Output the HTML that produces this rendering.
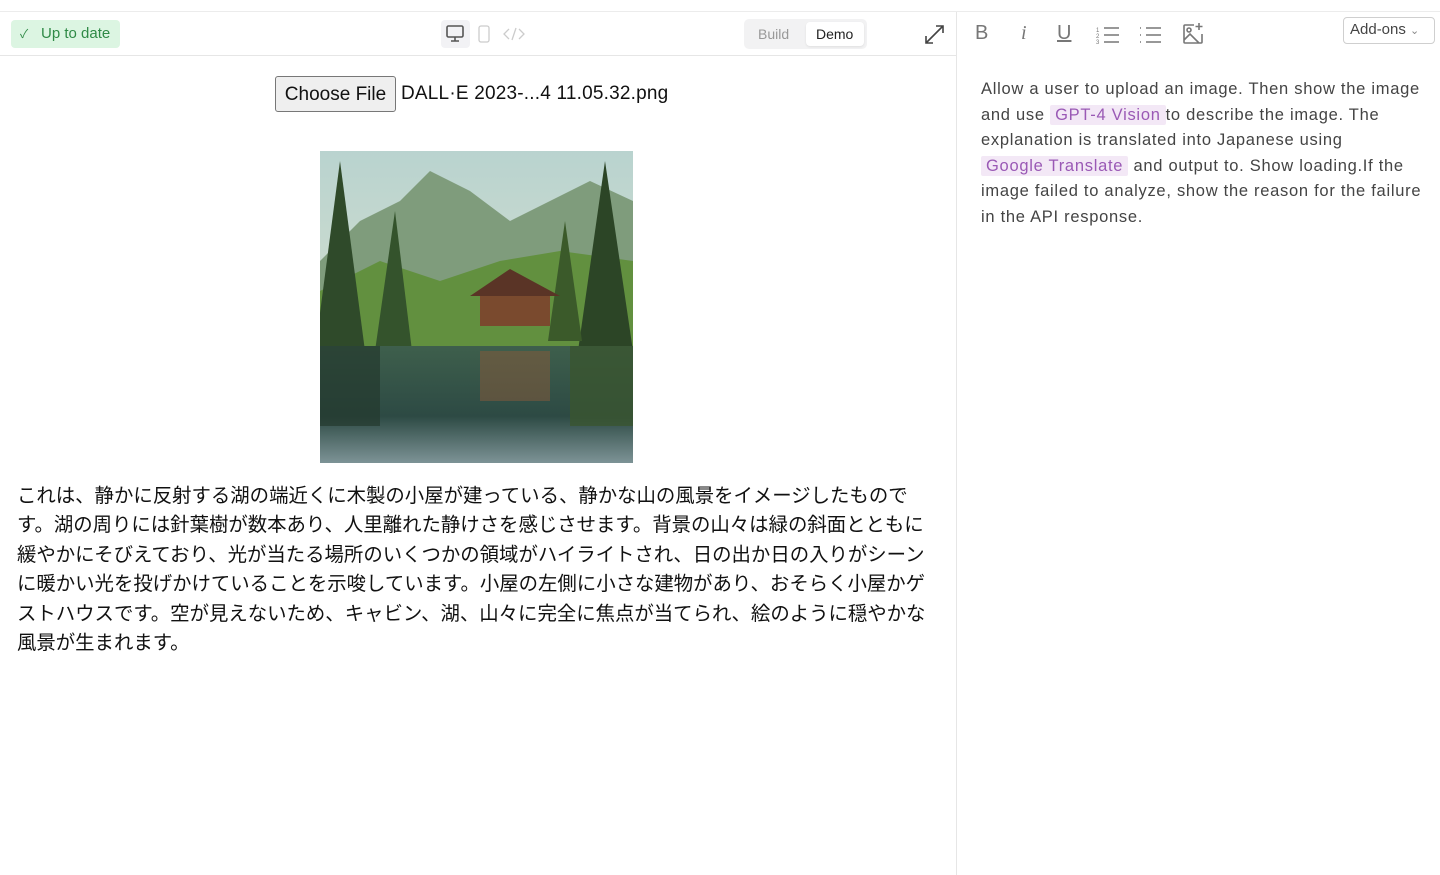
<!DOCTYPE html>
<html><head><meta charset="utf-8"><style>
*{box-sizing:border-box;margin:0;padding:0}
body{width:1440px;height:875px;background:#fff;font-family:"Liberation Sans","Noto Sans CJK JP",sans-serif;position:relative;overflow:hidden}
.topline{position:absolute;left:0;top:11px;width:1440px;height:1px;background:#ececec}
.left{position:absolute;left:0;top:12px;width:957px;height:863px;border-right:1px solid #e6e6e6}
.hdr{position:absolute;left:0;top:0;width:956px;height:44px;border-bottom:1px solid #e6e6e6}
.badge{position:absolute;left:11px;top:8px;width:109px;height:28px;background:#dcf5e2;border-radius:4px;color:#2f8a46;font-size:15px;line-height:28px;padding-left:30px}
.badge:before{content:"✓";position:absolute;left:9px;font-size:12px}
.dev{position:absolute;left:441px;top:8px;width:29px;height:28px;background:#f2f2f5;border-radius:4px}
.seg{position:absolute;left:744px;top:7px;width:123px;height:30px;background:#f2f2f3;border-radius:5px;font-size:14px}
.seg .b{position:absolute;left:14px;top:7px;color:#999}
.seg .d{position:absolute;left:62px;top:3px;width:58px;height:24px;background:#fff;border-radius:4px;color:#222;padding:4px 0 0 10px;box-shadow:0 1px 2px rgba(0,0,0,.08)}
.file{position:absolute;left:275px;top:64px;font-size:19px;color:#111;line-height:35px;letter-spacing:0.2px}
.file span.btn{display:inline-block;width:121px;height:36px;border:1px solid #777;border-radius:3px;background:#efefef;text-align:center;margin-right:5px;vertical-align:top;letter-spacing:0}
.img{position:absolute;left:320px;top:139px;width:313px;height:312px;overflow:hidden;background:#6f9567}
.jp{position:absolute;left:17px;top:470px;width:917px;font-size:19.4px;line-height:29.4px;color:#111}
.right{position:absolute;left:958px;top:12px;width:482px;height:863px}
.tb{position:absolute;top:10px;color:#777;font-size:20px}
.addon{position:absolute;left:385px;top:5px;width:92px;height:27px;border:1px solid #cfcfcf;border-radius:4px;font-size:15px;color:#444;padding:3px 0 0 6px}
.desc{position:absolute;left:23px;top:65px;width:450px;font-size:16.5px;letter-spacing:0.72px;line-height:25.6px;color:#444}
.tag{background:#f3e8f6;color:#9a59b5;padding:1px 5px;border-radius:2px;white-space:nowrap}
</style></head><body>
<div class="topline"></div>
<div class="left">
 <div class="hdr">
  <div class="badge">Up to date</div>
  <div class="dev"></div>
  <svg style="position:absolute;left:445px;top:13px" width="20" height="18" viewBox="0 0 20 18" fill="none" stroke="#555" stroke-width="1.6"><rect x="2" y="1" width="16" height="11" rx="1.5"/><path d="M10 12v4M6 16h8"/></svg>
  <svg style="position:absolute;left:478px;top:13px" width="12" height="18" viewBox="0 0 12 18" fill="none" stroke="#ccc" stroke-width="1.3"><rect x="1" y="1" width="10" height="16" rx="2"/></svg>
  <svg style="position:absolute;left:503px;top:15px" width="22" height="14" viewBox="0 0 22 14" fill="none" stroke="#ccc" stroke-width="1.3"><path d="M6 2L1 7l5 5M16 2l5 5-5 5M13 1L9 13"/></svg>
  <div class="seg"><span class="b">Build</span><span class="d">Demo</span></div>
  <svg style="position:absolute;left:924px;top:12px" width="21" height="21" viewBox="0 0 21 21" fill="none" stroke="#444" stroke-width="1.6"><path d="M2 19L19 2M12 2h7v7M2 12v7h7"/></svg>
 </div>
 <div class="file"><span class="btn">Choose File</span>DALL·E 2023-...4 11.05.32.png</div>
 <div class="img">
  <svg width="313" height="312" viewBox="0 0 313 312">
   <defs><linearGradient id="sky" x1="0" y1="0" x2="0" y2="1"><stop offset="0" stop-color="#b9d3cf"/><stop offset="1" stop-color="#e3e6cf"/></linearGradient>
   <linearGradient id="lake" x1="0" y1="0" x2="0" y2="1"><stop offset="0" stop-color="#3e5f4c"/><stop offset=".6" stop-color="#2d4a44"/><stop offset="1" stop-color="#7d9396"/></linearGradient></defs>
   <rect width="313" height="312" fill="url(#sky)"/>
   <path d="M0 110L40 70 80 50 110 20 150 40 190 70 230 50 270 30 313 50V200H0Z" fill="#7f9c7c"/>
   <path d="M0 140L60 110 120 130 180 110 240 100 313 110V210H0Z" fill="#62903f"/>
   <path d="M20 10L45 200H-5Z" fill="#2f4a2a"/><path d="M75 60L92 200H55Z" fill="#34532c"/>
   <path d="M285 10L313 200H258Z" fill="#2c4526"/><path d="M245 70L262 190H228Z" fill="#3b5a2a"/>
   <rect x="160" y="140" width="70" height="35" fill="#7a4a2e"/><path d="M150 145L190 118 240 145Z" fill="#5a3426"/>
   <rect x="0" y="195" width="313" height="117" fill="url(#lake)"/>
   <rect x="0" y="195" width="60" height="80" fill="#24392e" opacity=".7"/><rect x="250" y="195" width="63" height="80" fill="#3a5530" opacity=".8"/>
   <rect x="160" y="200" width="70" height="50" fill="#8a5a3a" opacity=".5"/>
  </svg>
 </div>
 <div class="jp">これは、静かに反射する湖の端近くに木製の小屋が建っている、静かな山の風景をイメージしたものです。湖の周りには針葉樹が数本あり、人里離れた静けさを感じさせます。背景の山々は緑の斜面とともに緩やかにそびえており、光が当たる場所のいくつかの領域がハイライトされ、日の出か日の入りがシーンに暖かい光を投げかけていることを示唆しています。小屋の左側に小さな建物があり、おそらく小屋かゲストハウスです。空が見えないため、キャビン、湖、山々に完全に焦点が当てられ、絵のように穏やかな風景が生まれます。</div>
</div>
<div class="right">
 <span class="tb" style="left:17px;">B</span>
 <span class="tb" style="left:63px;font-style:italic;font-family:'Liberation Serif'">i</span>
 <span class="tb" style="left:99px;text-decoration:underline">U</span>
 <svg style="position:absolute;left:138px;top:13px" width="24" height="20" viewBox="0 0 24 20" fill="none" stroke="#777" stroke-width="1.6"><path d="M8 3h15M8 10h15M8 17h15"/><text x="0" y="7" font-size="6" fill="#777" stroke="none">1</text><text x="0" y="13" font-size="6" fill="#777" stroke="none">2</text><text x="0" y="19" font-size="6" fill="#777" stroke="none">3</text></svg>
 <svg style="position:absolute;left:180px;top:13px" width="24" height="20" viewBox="0 0 24 20" fill="none" stroke="#777" stroke-width="1.6"><path d="M8 3h15M8 10h15M8 17h15M2 3h1M2 10h1M2 17h1"/></svg>
 <svg style="position:absolute;left:223px;top:10px" width="24" height="24" viewBox="0 0 24 24" fill="none" stroke="#777" stroke-width="1.6"><path d="M13 3H4a1 1 0 0 0-1 1v16a1 1 0 0 0 1 1h16a1 1 0 0 0 1-1v-8M3 18l6-6 9 9M18 1v7M14.5 4.5h7"/><circle cx="8" cy="8" r="2"/></svg>
 <div class="addon">Add-ons <span style="font-size:11px;color:#888">⌄</span></div>
 <div class="desc">Allow a user to upload an image. Then show the image and use <span class="tag">GPT-4 Vision</span>to describe the image. The explanation is translated into Japanese using <span class="tag">Google Translate</span> and output to. Show loading.If the image failed to analyze, show the reason for the failure in the API response.</div>
</div>
</body></html>
